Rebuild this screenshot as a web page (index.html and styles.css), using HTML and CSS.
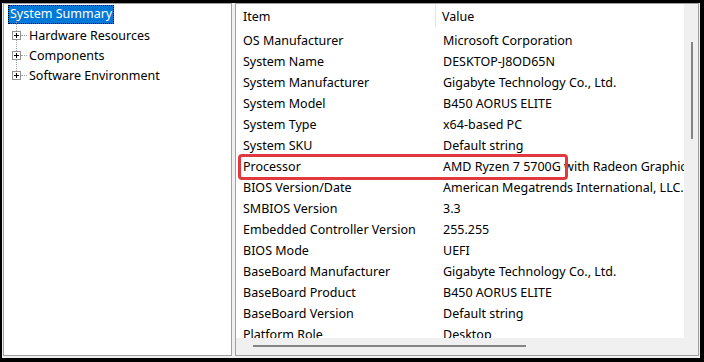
FILE: index.html
```html
<!DOCTYPE html>
<html lang="en">
<head>
  <meta charset="UTF-8" />
  <meta name="viewport" content="width=device-width, initial-scale=1.0" />
  <title>System Information</title>
  <link rel="stylesheet" href="styles.css">
</head>
<body>
  <div class="frame">
    <div class="tree-pane">
      <div class="tree-root"><span class="selected">System Summary</span></div>
      <ul class="tree">
        <li><span class="expander"></span><span class="stub"></span>Hardware Resources</li>
        <li><span class="expander"></span><span class="stub"></span>Components</li>
        <li class="last"><span class="expander"></span><span class="stub"></span>Software Environment</li>
      </ul>
    </div>

    <div class="list-pane">
      <div class="list">
        <div class="row header">
          <div class="col-item">Item</div>
          <div class="col-value">Value</div>
        </div>
        <div class="row"><div class="col-item">OS Manufacturer</div><div class="col-value">Microsoft Corporation</div></div>
        <div class="row"><div class="col-item">System Name</div><div class="col-value">DESKTOP-J8OD65N</div></div>
        <div class="row"><div class="col-item">System Manufacturer</div><div class="col-value">Gigabyte Technology Co., Ltd.</div></div>
        <div class="row"><div class="col-item">System Model</div><div class="col-value">B450 AORUS ELITE</div></div>
        <div class="row"><div class="col-item">System Type</div><div class="col-value">x64-based PC</div></div>
        <div class="row"><div class="col-item">System SKU</div><div class="col-value">Default string</div></div>
        <div class="row marked">
          <div class="col-item">Processor</div>
          <div class="col-value">AMD Ryzen 7 5700G with Radeon Graphics, 3801 Mhz, 8 Core(s), 16 Logical Processor(s)</div>
          <span class="callout"></span>
        </div>
        <div class="row"><div class="col-item">BIOS Version/Date</div><div class="col-value">American Megatrends International, LLC. F60c, 10/29/2020</div></div>
        <div class="row"><div class="col-item">SMBIOS Version</div><div class="col-value">3.3</div></div>
        <div class="row"><div class="col-item">Embedded Controller Version</div><div class="col-value">255.255</div></div>
        <div class="row"><div class="col-item">BIOS Mode</div><div class="col-value">UEFI</div></div>
        <div class="row"><div class="col-item">BaseBoard Manufacturer</div><div class="col-value">Gigabyte Technology Co., Ltd.</div></div>
        <div class="row"><div class="col-item">BaseBoard Product</div><div class="col-value">B450 AORUS ELITE</div></div>
        <div class="row"><div class="col-item">BaseBoard Version</div><div class="col-value">Default string</div></div>
        <div class="row"><div class="col-item">Platform Role</div><div class="col-value">Desktop</div></div>
      </div>
      <div class="vscroll"><span class="vthumb"></span></div>
      <div class="hscroll"><span class="hthumb"></span></div>
      <div class="corner"></div>
    </div>
  </div>
</body>
</html>
```

FILE: styles.css
```css
body {
  margin: 0;
  background-color: #000;
  font-family: "Noto Sans", "Open Sans", sans-serif;
  font-size: 12.5px;
  color: #000;
}
.frame {
  display: flex;
  gap: 3px;
  width: 696px;
  height: 353px;
  margin: 3px 4px 0 2px;
  padding: 0 1px 2px 1px;
  background-color: #f0f0f0;
}

/* left tree */
.tree-pane {
  width: 227px;
  border: 1px solid #a0a0a0;
  background-color: #fff;
  padding-top: 1px;
}
.tree-root {
  height: 20px;
  padding-left: 4px;
}
.selected {
  display: inline-block;
  height: 19px;
  line-height: 18px;
  padding: 0 2px;
  background-color: #0078d7;
  color: #fff;
  outline: 1px dotted #000;
  outline-offset: -1px;
}
.tree {
  list-style: none;
  margin: 0;
  padding: 0 0 0 8px;
}
.tree li {
  position: relative;
  display: flex;
  align-items: center;
  height: 20px;
}
.tree li::before {
  content: "";
  position: absolute;
  left: 4px;
  top: -10px;
  height: 20px;
  border-left: 1px dotted #a0a0a0;
}
.expander {
  position: relative;
  box-sizing: border-box;
  width: 9px;
  height: 9px;
  border: 1px solid #919191;
  background-color: #fff;
  z-index: 1;
}
.expander::before,
.expander::after {
  content: "";
  position: absolute;
  background-color: #000;
}
.expander::before {
  left: 1px;
  top: 3px;
  width: 5px;
  height: 1px;
}
.expander::after {
  left: 3px;
  top: 1px;
  width: 1px;
  height: 5px;
}
.stub {
  width: 6px;
  margin-right: 2px;
  border-top: 1px dotted #a0a0a0;
}

/* right list */
.list-pane {
  flex: 1;
  display: grid;
  grid-template-columns: 1fr 14px;
  grid-template-rows: 1fr 17px;
  border: 1px solid #a0a0a0;
  background-color: #fff;
}
.list {
  overflow: hidden;
  min-height: 0;
}
.row {
  position: relative;
  display: flex;
  height: 21px;
  line-height: 21px;
  white-space: nowrap;
}
.row.header {
  height: 26px;
  line-height: 26px;
}
.col-item {
  flex: none;
  width: 200px;
  padding-left: 7px;
  box-sizing: border-box;
}
.col-value {
  padding-left: 7px;
}
.header .col-item {
  border-right: 1px solid #e5e5e5;
  height: 23px;
}
.header .col-value {
  padding-left: 6px;
}
.callout {
  position: absolute;
  left: 2px;
  top: -2px;
  width: 324px;
  height: 20px;
  border: 3px solid #e0393e;
  border-radius: 4px;
}
.vscroll {
  position: relative;
  background-color: #f0f0f0;
}
.vthumb {
  position: absolute;
  left: 7px;
  top: 38px;
  width: 2px;
  height: 97px;
  background-color: #858585;
}
.hscroll {
  position: relative;
  background-color: #f0f0f0;
}
.hthumb {
  position: absolute;
  left: 17px;
  top: 7px;
  width: 273px;
  height: 2px;
  background-color: #858585;
}
.corner {
  background-color: #f0f0f0;
}
```
